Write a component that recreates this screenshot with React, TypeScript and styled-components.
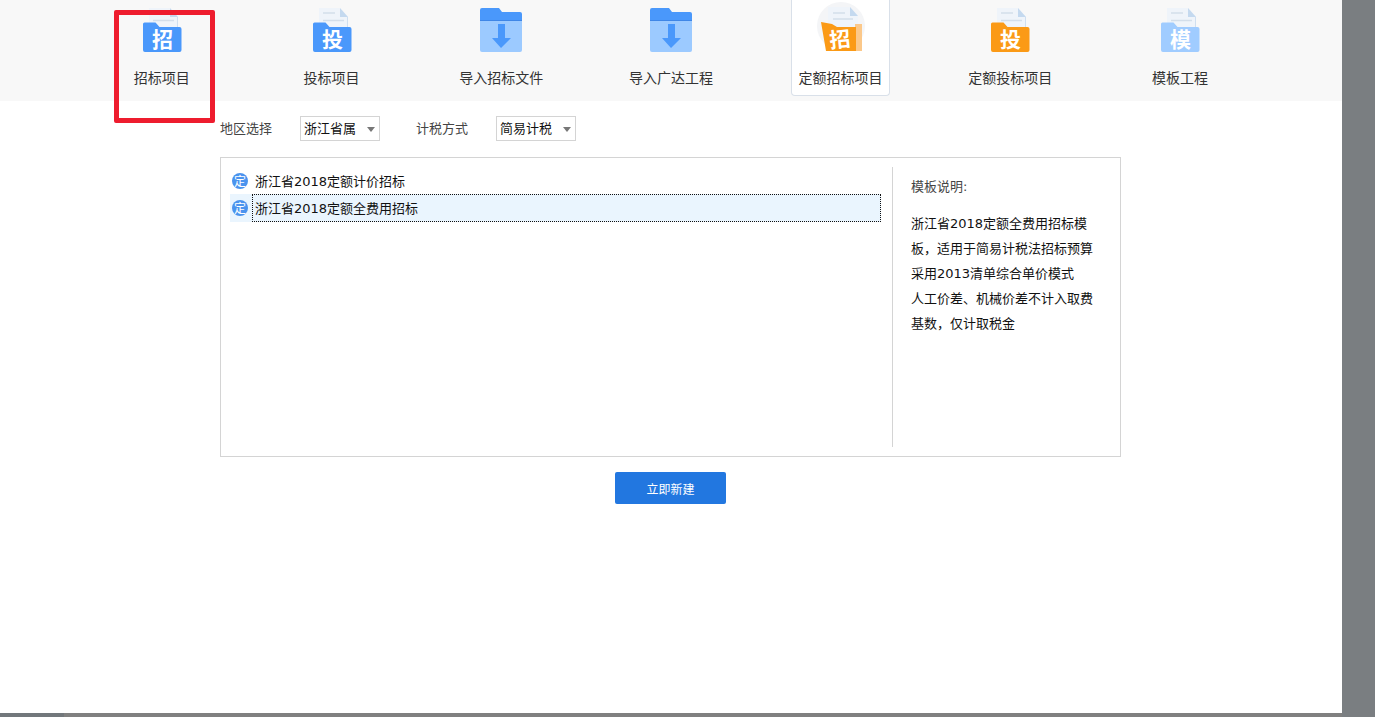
import styled, { createGlobalStyle } from 'styled-components';

const GlobalStyle = createGlobalStyle`
  html, body {
    margin: 0;
    height: 100%;
    overflow: hidden;
    background: #7a7e81;
    font-family: "Noto Sans CJK SC", "Noto Sans", sans-serif;
  }
`;

const BLUE = '#4a98fb';
const ORANGE = '#fb9a16';
const PALE = '#a0ccff';

const toolbarItems = [
  { label: '招标项目', kind: 'doc', color: BLUE, char: '招' },
  { label: '投标项目', kind: 'doc', color: BLUE, char: '投' },
  { label: '导入招标文件', kind: 'import' },
  { label: '导入广达工程', kind: 'import' },
  { label: '定额招标项目', kind: 'active', color: ORANGE, char: '招' },
  { label: '定额投标项目', kind: 'doc', color: ORANGE, char: '投' },
  { label: '模板工程', kind: 'doc', color: PALE, char: '模' },
];

const description = [
  '浙江省2018定额全费用招标模',
  '板，适用于简易计税法招标预算',
  '采用2013清单综合单价模式',
  '人工价差、机械价差不计入取费',
  '基数，仅计取税金',
];

function DocIcon({ color, char }: { color: string; char: string }) {
  return (
    <svg width="40" height="46" viewBox="0 0 40 46">
      <path d="M7 2h21l8 9v25H7z" fill="#eff4fa" />
      <path d="M28 2l8 9h-8z" fill="#c4d9ef" />
      <path d="M35.500 11v20" stroke="#cfdff0" strokeWidth="1" />
      <path d="M11 7h12M11 14.500h21" stroke="#d3deea" strokeWidth="1.500" />
      <path d="M1 18a1.500 1.500 0 0 1 1.500-1.500h11l4 4.500h20a2 2 0 0 1 2 2V44a2 2 0 0 1-2 2H3a2 2 0 0 1-2-2z" fill={color} />
      <text x="20.500" y="41" textAnchor="middle" fontSize="21" fontWeight="700" fill="#fff" fontFamily="Noto Sans CJK SC">
        {char}
      </text>
    </svg>
  );
}

function ActiveIcon({ color, char }: { color: string; char: string }) {
  return (
    <svg width="48" height="50" viewBox="0 0 48 50">
      <circle cx="24" cy="24" r="24" fill="#f4f5f7" />
      <path d="M11 5h22l8 9v26H11z" fill="#eff4fa" />
      <path d="M33 5l8 9h-8z" fill="#c4d9ef" />
      <path d="M16 11h12M16 17h20" stroke="#d3deea" strokeWidth="1.500" />
      <path d="M38 22h7v27h-7z" fill="#fbc88a" />
      <path d="M4 20l11 2 5 3 19 0v24H9z" fill={color} />
      <text
        x="23"
        y="45"
        textAnchor="middle"
        fontSize="21"
        fontWeight="700"
        fill="#fff"
        fontFamily="Noto Sans CJK SC"
        transform="rotate(-6 23 38)"
      >
        {char}
      </text>
    </svg>
  );
}

function ImportIcon() {
  return (
    <svg width="42" height="44" viewBox="0 0 42 44">
      <path d="M0 2a2 2 0 0 1 2-2h17l3 4h18a2 2 0 0 1 2 2v8H0z" fill={BLUE} />
      <path d="M0 13h42v29a2 2 0 0 1-2 2H2a2 2 0 0 1-2-2z" fill="#9ccaff" />
      <path d="M0 12.500h42" stroke="#3f86e6" strokeWidth="1" />
      <path d="M18 16h7v14h6l-10 10-9-10h6z" fill={BLUE} />
    </svg>
  );
}

function App() {
  return (
    <>
      <GlobalStyle />
      <Desktop>
        <Window>
          <Toolbar>
            {toolbarItems.map((item) => (
              <ToolItem key={item.label} $active={item.kind === 'active'}>
                <IconSlot>
                  {item.kind === 'doc' && <DocIcon color={item.color!} char={item.char!} />}
                  {item.kind === 'active' && <ActiveIcon color={item.color!} char={item.char!} />}
                  {item.kind === 'import' && <ImportIcon />}
                </IconSlot>
                <ToolLabel>{item.label}</ToolLabel>
              </ToolItem>
            ))}
          </Toolbar>
          <Content>
            <FilterRow>
              <FieldLabel>地区选择</FieldLabel>
              <Select>浙江省属</Select>
              <FieldLabel>计税方式</FieldLabel>
              <Select>简易计税</Select>
            </FilterRow>
            <Panel>
              <TemplateList>
                <TemplateRow>
                  <Badge>定</Badge>
                  <TemplateName>浙江省2018定额计价招标</TemplateName>
                </TemplateRow>
                <TemplateRow $selected>
                  <Badge>定</Badge>
                  <TemplateName $selected>浙江省2018定额全费用招标</TemplateName>
                </TemplateRow>
              </TemplateList>
              <Description>
                <DescriptionTitle>模板说明:</DescriptionTitle>
                {description.map((line) => (
                  <DescriptionLine key={line}>{line}</DescriptionLine>
                ))}
              </Description>
            </Panel>
            <Actions>
              <CreateButton>立即新建</CreateButton>
            </Actions>
          </Content>
          <Annotation />
        </Window>
        <BottomEdge>
          <EdgeDark />
          <EdgeGray />
        </BottomEdge>
      </Desktop>
    </>
  );
}

const Desktop = styled.div`
  width: 1375px;
  height: 717px;
  display: flex;
  flex-direction: column;
`;

const Window = styled.div`
  position: relative;
  width: 1342px;
  height: 713px;
  background: #fff;
`;

const BottomEdge = styled.div`
  display: flex;
  width: 1342px;
  height: 4px;
`;

const EdgeDark = styled.div`
  width: 64px;
  background: #72777b;
`;

const EdgeGray = styled.div`
  flex: 1;
  background: #808080;
`;

const Toolbar = styled.div`
  height: 101px;
  padding-left: 112px;
  box-sizing: border-box;
  display: flex;
  gap: 70px;
  align-items: flex-start;
  background: #f8f8f8;
`;

const ToolItem = styled.div<{ $active?: boolean }>`
  width: 99.7px;
  height: 96px;
  box-sizing: border-box;
  display: flex;
  flex-direction: column;
  align-items: center;
  border-radius: 0 0 4px 4px;
  background: ${(p) => (p.$active ? '#fff' : 'transparent')};
  border: 1px solid ${(p) => (p.$active ? '#d9e0e9' : 'transparent')};
  border-top: none;
`;

const IconSlot = styled.div`
  height: 67px;
  padding-bottom: 15px;
  box-sizing: border-box;
  display: flex;
  align-items: flex-end;
  justify-content: center;
  svg {
    display: block;
    overflow: visible;
  }
`;

const ToolLabel = styled.div`
  font-size: 14px;
  line-height: 20px;
  color: #333;
  white-space: nowrap;
`;

const Content = styled.div`
  padding: 15px 0 0 220px;
`;

const FilterRow = styled.div`
  display: flex;
  align-items: center;
  height: 25px;
`;

const FieldLabel = styled.div`
  width: 80px;
  padding-bottom: 2px;
  font-size: 13px;
  color: #444;
  &:nth-child(3) {
    margin-left: 36px;
  }
`;

const Select = styled.div`
  position: relative;
  width: 80px;
  height: 25px;
  box-sizing: border-box;
  padding-left: 3px;
  border: 1px solid #d4d4d4;
  font-size: 13px;
  line-height: 22px;
  color: #111;
  &::after {
    content: '';
    position: absolute;
    right: 4px;
    top: 10px;
    border: 4px solid transparent;
    border-top: 5px solid #777;
    border-bottom: none;
  }
`;

const Panel = styled.div`
  margin-top: 16px;
  width: 901px;
  height: 300px;
  box-sizing: border-box;
  padding: 9px 0;
  border: 1px solid #d4d4d4;
  display: flex;
  font-family: "DejaVu Sans", "Noto Sans CJK SC", sans-serif;
`;

const TemplateList = styled.div`
  width: 671px;
  padding-left: 9px;
  box-sizing: border-box;
  display: flex;
  flex-direction: column;
`;

const TemplateRow = styled.div<{ $selected?: boolean }>`
  width: 651px;
  height: 28px;
  padding-left: 2px;
  box-sizing: border-box;
  display: flex;
  align-items: center;
  background: ${(p) => (p.$selected ? '#eaf5fe' : 'transparent')};
  margin-top: ${(p) => (p.$selected ? '-1px' : '0')};
`;

const Badge = styled.div`
  width: 16px;
  height: 16px;
  border-radius: 50%;
  background: #4a93ee;
  color: #fff;
  font-family: "Noto Sans CJK SC", sans-serif;
  font-size: 12px;
  line-height: 16px;
  text-align: center;
  flex: none;
`;

const TemplateName = styled.div<{ $selected?: boolean }>`
  flex: 1;
  height: 100%;
  margin-left: 4px;
  padding-left: 2px;
  box-sizing: border-box;
  font-size: 13px;
  line-height: 27px;
  color: #111;
  border: 1px dotted ${(p) => (p.$selected ? '#111' : 'transparent')};
`;

const Description = styled.div`
  flex: 1;
  padding: 10px 0 0 18px;
  border-left: 1px solid #d4d4d4;
  font-size: 13px;
  color: #111;
`;

const DescriptionTitle = styled.div`
  line-height: 20px;
  color: #444;
  margin-bottom: 14px;
`;

const DescriptionLine = styled.div`
  line-height: 25px;
  white-space: nowrap;
`;

const Actions = styled.div`
  width: 901px;
  margin-top: 15px;
  display: flex;
  justify-content: center;
`;

const CreateButton = styled.button`
  width: 111px;
  height: 32px;
  padding: 0;
  border: none;
  border-radius: 2px;
  background: #2277e0;
  color: #fff;
  font-family: inherit;
  font-size: 12px;
`;

const Annotation = styled.div`
  position: absolute;
  left: 114px;
  top: 10px;
  width: 101px;
  height: 113px;
  box-sizing: border-box;
  border: 5px solid #ee1c2e;
  border-radius: 2px;
  pointer-events: none;
`;

export default App;
